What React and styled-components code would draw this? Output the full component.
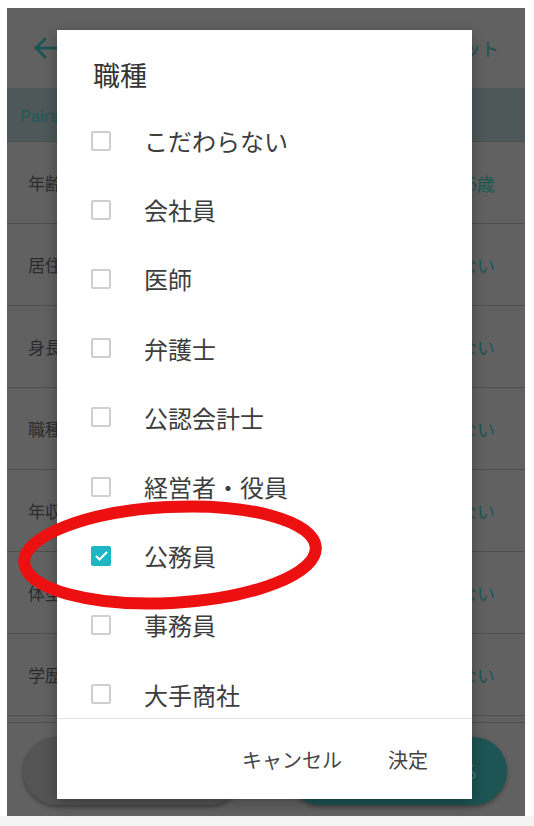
import React from 'react'
import styled, { createGlobalStyle } from 'styled-components'

const jobs = ['こだわらない', '会社員', '医師', '弁護士', '公認会計士', '経営者・役員', '公務員', '事務員', '大手商社']
const checkedJob = '公務員'

const rows = [
  { label: '年齢', value: '20歳 〜 35歳' },
  { label: '居住地', value: 'こだわらない' },
  { label: '身長', value: 'こだわらない' },
  { label: '職種', value: 'こだわらない' },
  { label: '年収', value: 'こだわらない' },
  { label: '体型', value: 'こだわらない' },
  { label: '学歴', value: 'こだわらない' },
]

const GlobalStyle = createGlobalStyle`
  body{
    margin:0;
    background:#fff;
    font-family: Roboto, "Noto Sans CJK JP", sans-serif;
  }
`

function App(){
  return(
    <Page>
      <GlobalStyle/>
      {/* the app behind the dialog, drawn in its dimmed colours */}
      <Screen>
        <Header>
          <BackArrow viewBox="0 0 24 24">
            <path d="M20 12H4M11 5l-7 7 7 7"/>
          </BackArrow>
          <HeaderTitle>検索条件</HeaderTitle>
          <Reset>リセット</Reset>
        </Header>
        <Band>Pairsおすすめの条件で探す</Band>
        {rows.map((row)=>(
          <Row key={row.label}>
            <RowLabel>{row.label}</RowLabel>
            <RowValue>{row.value}</RowValue>
          </Row>
        ))}
        <Footer>
          <Pill/>
          <Pill $primary>この条件で検索する</Pill>
        </Footer>
      </Screen>

      <Dialog>
        <DialogTitle>職種</DialogTitle>
        <List>
          {jobs.map((job)=>(
            <Item key={job}>
              <Box $checked={job === checkedJob}>
                {job === checkedJob &&
                  <svg viewBox="0 0 24 24" width="19" height="19">
                    <path d="M5 12.5l4.5 4.5L19 7.5" fill="none" stroke="#fff" strokeWidth="2.6"/>
                  </svg>}
              </Box>
              <ItemText>{job}</ItemText>
            </Item>
          ))}
        </List>
        <Actions>
          <TextButton>キャンセル</TextButton>
          <TextButton>決定</TextButton>
        </Actions>
      </Dialog>

      <Mark viewBox="0 0 534 826">
        <ellipse cx="170" cy="555" rx="146" ry="48" transform="rotate(-3 170 555)"/>
      </Mark>
    </Page>
  )
}

const Page = styled.div`
  position:relative;
  width:534px;
  height:826px;
  padding:8px 0 0 7px;
  box-sizing:border-box;
  background:linear-gradient(#fff 816px, #f4f4f4 816px);
`
const Screen = styled.div`
  width:518px;
  height:808px;
  background:#616161;
  display:flex;
  flex-direction:column;
  overflow:hidden;
`
const Header = styled.div`
  height:80px;
  display:flex;
  align-items:center;
  justify-content:space-between;
  padding:0 26px 0 24px;
  box-sizing:border-box;
  flex-shrink:0;
`
const BackArrow = styled.svg`
  width:30px;
  height:30px;
  fill:none;
  stroke:#1b5454;
  stroke-width:2.2;
  stroke-linecap:square;
`
const HeaderTitle = styled.div`
  font-size:20px;
  color:#2a2a2a;
`
const Reset = styled.div`
  font-family:"Noto Sans CJK JP", sans-serif;
  font-size:18px;
  color:#1b5454;
`
const Band = styled.div`
  height:54px;
  flex-shrink:0;
  background:#4e5858;
  border-bottom:1px solid #485050;
  box-sizing:border-box;
  display:flex;
  align-items:center;
  padding-left:13px;
  font-size:17px;
  color:#215959;
`
const Row = styled.div`
  height:82px;
  flex-shrink:0;
  box-sizing:border-box;
  border-bottom:1px solid #4e4e4e;
  display:flex;
  align-items:center;
  justify-content:space-between;
  padding:0 30px 0 21px;
  font-family:"Noto Sans CJK JP", sans-serif;
`
const RowLabel = styled.div`
  font-size:17px;
  color:#2c2c2c;
`
const RowValue = styled.div`
  font-size:18px;
  color:#1d5555;
`
const Footer = styled.div`
  flex:1;
  margin-top:6px;
  border-top:1px solid #4e4e4e;
  display:flex;
  gap:44px;
  padding:14px 18px 0 16px;
`
const Pill = styled.div`
  flex:1;
  height:68px;
  border-radius:34px;
  display:flex;
  align-items:center;
  justify-content:center;
  font-family:"Noto Sans CJK JP", sans-serif;
  font-size:18px;
  background:${p => p.$primary ? '#1d5454' : '#545454'};
  color:${p => p.$primary ? '#4a7d7d' : '#2f2f2f'};
  box-shadow:0 2px 4px rgba(0,0,0,0.35);
`
const Dialog = styled.div`
  position:absolute;
  left:57px;
  top:30px;
  width:415px;
  height:769px;
  background:#fff;
  display:flex;
  flex-direction:column;
  box-shadow:0 4px 14px rgba(0,0,0,0.3);
  font-family:"Noto Sans CJK JP", sans-serif;
`
const DialogTitle = styled.div`
  padding:30px 0 16px 36px;
  line-height:30px;
  font-size:27px;
  color:#333;
`
const List = styled.div`
  flex:1;
  overflow:hidden;
`
const Item = styled.div`
  height:69.2px;
  display:flex;
  align-items:center;
  padding-left:34px;
`
const Box = styled.span`
  width:20px;
  height:20px;
  box-sizing:border-box;
  border-radius:2px;
  border:${p => p.$checked ? 'none' : '2px solid #cfcfcf'};
  background:${p => p.$checked ? '#1db6c4' : '#fff'};
  display:flex;
  align-items:center;
  justify-content:center;
  margin-right:33px;
`
const ItemText = styled.span`
  font-size:24px;
  color:#3d3d3d;
`
const Actions = styled.div`
  height:80px;
  flex-shrink:0;
  border-top:1px solid #e2e2e2;
  display:flex;
  justify-content:flex-end;
  align-items:center;
  gap:22px;
  padding-right:32px;
`
const TextButton = styled.div`
  padding:8px 12px;
  font-size:20px;
  color:#444;
`
const Mark = styled.svg`
  position:absolute;
  left:0;
  top:0;
  width:534px;
  height:826px;
  pointer-events:none;
  ellipse{
    fill:none;
    stroke:#ec1010;
    stroke-width:12;
  }
`

export default App
